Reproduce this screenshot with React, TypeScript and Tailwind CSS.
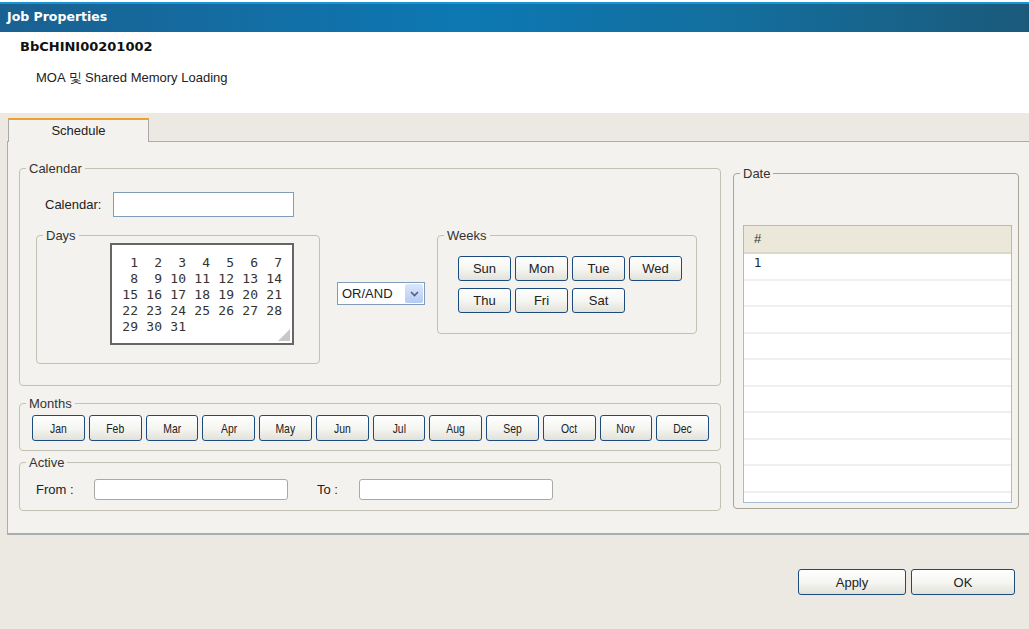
import React from "react";

const btn =
  "flex items-center justify-center rounded-[3px] border border-[#1c4c7e] bg-[linear-gradient(#ffffff,#f4f4f0_55%,#e2e1d9)] text-[13px] text-[#222] leading-none";

const legend = "ml-[6px] px-[3px] leading-[15px] text-[13px] text-[#333]";

function Fieldset({
  title,
  className,
  children,
}: {
  title: string;
  className?: string;
  children: React.ReactNode;
}) {
  return (
    <fieldset className={`rounded-[4px] border border-[#c3c1b4] ${className || ""}`}>
      <legend className={legend}>{title}</legend>
      {children}
    </fieldset>
  );
}

const weeks = ["Sun", "Mon", "Tue", "Wed", "Thu", "Fri", "Sat"];
const months = ["Jan", "Feb", "Mar", "Apr", "May", "Jun", "Jul", "Aug", "Sep", "Oct", "Nov", "Dec"];
const days = Array.from({ length: 31 }, (_, i) => i + 1);

export default function App() {
  return (
    <div className="flex h-[629px] w-[1029px] flex-col overflow-hidden bg-[#ece9e3] font-['Liberation_Sans',Arial,sans-serif] text-[13px] text-[#222]">
      {/* title bar */}
      <div className="h-[32px] bg-white pt-[2px]">
        <div className="flex h-[30px] items-center border-t-2 border-[#1a93d8] bg-[linear-gradient(to_right,#1a6191,#0d78b3_45%,#136f9f_70%,#1b5a7b)] pl-[7px] pb-[1px] font-['DejaVu_Sans',sans-serif] text-[12.5px] font-bold text-white">
          Job Properties
        </div>
      </div>

      {/* header */}
      <div className="h-[81px] bg-white">
        <div className="pl-[20px] pt-[7px] font-['DejaVu_Sans',sans-serif] text-[13px] font-bold leading-[16px] text-[#111]">
          BbCHINI00201002
        </div>
        <div className="pl-[36px] pt-[15px] text-[13px] leading-[16px] text-[#222]">
          MOA 및 Shared Memory Loading
        </div>
      </div>

      {/* tabs */}
      <div className="flex pl-[8px] pt-[5px]">
        <div className="relative z-10 -mb-px flex h-[24px] w-[141px] items-center justify-center border-x border-t-2 border-x-[#a9a9a9] border-t-[#f0a030] bg-[#f3f2ee] text-[13px] text-[#222]">
          Schedule
        </div>
      </div>

      <div className="ml-[7px] flex h-[394px] border-b-2 border-l border-t border-[#a8adb0] bg-[#f3f2ee] pl-[11px] pt-[19px]">
        {/* left column */}
        <div className="flex w-[702px] flex-col">
          <Fieldset title="Calendar" className="pb-[21px]">
            <div className="mt-[16px] flex items-center pl-[25px]">
              <span className="w-[68px]">Calendar:</span>
              <div className="h-[25px] w-[181px] border border-[#7f9db9] bg-white" />
            </div>

            <div className="mt-[11px] flex items-start pl-[16px]">
              <Fieldset title="Days" className="w-[284px] pb-[18px]">
                <div className="pl-[73px]">
                  <div className="relative h-[102px] w-[184px] border-2 border-[#666] bg-white pl-[2px] pt-[10px] font-['DejaVu_Sans_Mono',monospace] text-[13px] leading-[16px] text-[#333]">
                    <div className="grid grid-cols-[repeat(7,24px)]">
                      {days.map((d) => (
                        <span key={d} className="text-right">
                          {d}
                        </span>
                      ))}
                    </div>
                    <svg className="absolute bottom-[2px] right-[2px]" width="12" height="12" viewBox="0 0 12 12">
                      <polygon points="12,0 12,12 0,12" fill="#c8c8c8" />
                    </svg>
                  </div>
                </div>
              </Fieldset>

              <div className="ml-[17px] mt-[54px] flex h-[23px] w-[88px] items-center border border-[#7f9db9] bg-white">
                <span className="flex-1 pl-[4px] text-[13px]">OR/AND</span>
                <div className="mr-[1px] flex h-[19px] w-[18px] items-center justify-center rounded-[2px] bg-[linear-gradient(#dbe6fb,#b6cbf3)]">
                  <svg width="9" height="6" viewBox="0 0 9 6">
                    <path d="M1 1 L4.5 4.5 L8 1" fill="none" stroke="#4d6185" strokeWidth="1.6" />
                  </svg>
                </div>
              </div>

              <Fieldset title="Weeks" className="ml-[12px] w-[260px] pb-[20px]">
                <div className="mt-[13px] grid grid-cols-[repeat(4,53px)] gap-x-[4px] gap-y-[7px] pl-[20px]">
                  {weeks.map((w) => (
                    <div key={w} className={`${btn} h-[25px]`}>
                      {w}
                    </div>
                  ))}
                </div>
              </Fieldset>
            </div>
          </Fieldset>

          <Fieldset title="Months" className="mt-[10px] pb-[9px]">
            <div className="mt-[4px] flex gap-[4px] pl-[12px] pr-[11px]">
              {months.map((m) => (
                <div key={m} className={`${btn} h-[26px] flex-1`}>
                  <span className="inline-block scale-x-[0.8]">{m}</span>
                </div>
              ))}
            </div>
          </Fieldset>

          <Fieldset title="Active" className="mt-[4px] pb-[10px]">
            <div className="mt-[9px] flex items-center pl-[16px]">
              <span className="w-[58px]">From :</span>
              <div className="h-[21px] w-[194px] rounded-[3px] border border-[#a9a9a9] bg-white" />
              <span className="ml-[29px] w-[42px]">To :</span>
              <div className="h-[21px] w-[194px] rounded-[3px] border border-[#a9a9a9] bg-white" />
            </div>
          </Fieldset>
        </div>

        {/* right column */}
        <fieldset className="ml-[12px] mt-[5px] h-[343px] w-[286px] rounded-[4px] border border-[#a7a697] pb-[4px]">
          <legend className={legend}>Date</legend>
          <div className="ml-[9px] mt-[44px] h-[278px] w-[269px] overflow-hidden border border-[#a6bcd4] bg-white">
            <div className="flex h-[28px] items-center border-b-2 border-[#dcd8c8] bg-[#ebe8da] pl-[10px] text-[13px] text-[#333]">
              #
            </div>
            {Array.from({ length: 10 }, (_, i) => (
              <div key={i} className="h-[26.5px] border-b-2 border-[#efefef] pl-[10px] pt-[2px] font-['DejaVu_Sans',sans-serif] text-[12px] leading-[15px]">
                {i === 0 ? "1" : ""}
              </div>
            ))}
          </div>
        </fieldset>
      </div>

      {/* footer buttons */}
      <div className="mt-[34px] flex justify-end gap-[5px] pr-[14px]">
        <div className={`${btn} h-[26px] w-[108px]`}>Apply</div>
        <div className={`${btn} h-[26px] w-[104px]`}>OK</div>
      </div>
    </div>
  );
}
